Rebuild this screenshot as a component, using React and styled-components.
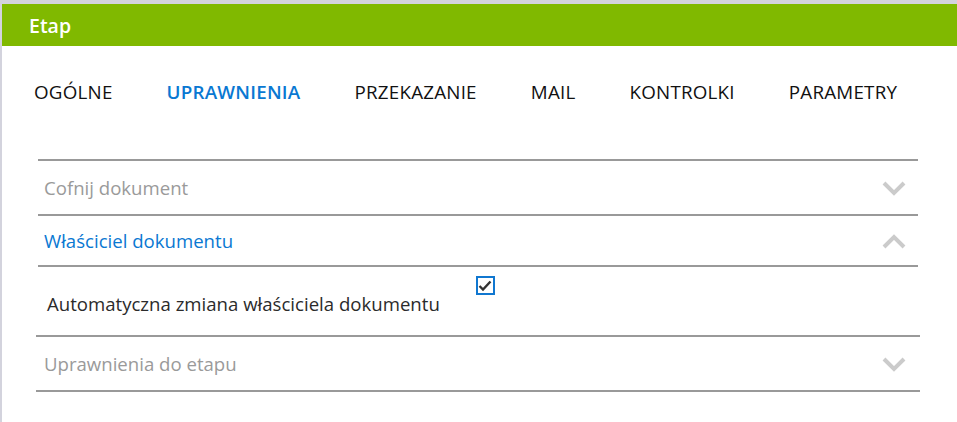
import React, { useState } from 'react';
import styled, { createGlobalStyle } from 'styled-components';

const GlobalStyle = createGlobalStyle`
  html, body {
    margin: 0;
    padding: 0;
    background: #ffffff;
  }
  body {
    font-family: "Open Sans", "Noto Sans", sans-serif;
  }
`;

const Frame = styled.div`
  min-height: 418px;
  border-top: 4px solid #d3d3dd;
  border-left: 2px solid #d3d3dd;
  background: #fff;
`;

const Header = styled.div`
  height: 42px;
  display: flex;
  align-items: center;
  padding-left: 27px;
  background: #80b900;
  color: #fff;
  font-size: 19.5px;
  font-weight: 600;
`;

const Tabs = styled.nav`
  display: flex;
  align-items: center;
  gap: 54px;
  height: 40px;
  margin-top: 26px;
  padding-left: 32px;
`;

const Tab = styled.div`
  font-size: 18.8px;
  letter-spacing: 0.22px;
  color: ${p => (p.active ? '#0a78d2' : '#111')};
  font-weight: ${p => (p.active ? 600 : 400)};
  cursor: pointer;
`;

const Accordion = styled.div`
  margin: 47px 37px 0 34px;
`;

const Item = styled.div`
  margin: 0 2px;
  border-top: 2px solid #999;
  &:last-child {
    margin: 0;
    border-bottom: 2px solid #999;
  }
  &:last-child > div:first-child {
    padding: 0 14px 0 8px;
  }
`;

const ItemHeader = styled.div`
  height: ${p => (p.open ? 49 : 53)}px;
  display: flex;
  align-items: center;
  justify-content: space-between;
  padding: 0 12px 0 6px;
  font-size: 18.6px;
  color: ${p => (p.open ? '#0a78d2' : '#9a9a9a')};
  cursor: pointer;
`;

const Content = styled.div`
  display: flex;
  align-items: flex-start;
  height: 68px;
  border-top: 2px solid #999;
  padding-left: 9px;
`;

const Label = styled.span`
  margin-top: 24px;
  font-size: 18.6px;
  color: #2b2b2b;
`;

const Check = styled.span`
  margin: 9px 0 0 36px;
  width: 15px;
  height: 15px;
  border: 2px solid #1077d0;
  display: flex;
  align-items: center;
  justify-content: center;
`;

const Chevron = ({ up }) => (
  <svg width="24" height="16" viewBox="0 0 24 16">
    <path
      d={up ? 'M2 14 L12 4 L22 14' : 'M2 3 L12 13 L22 3'}
      fill="none"
      stroke="#cbcbcb"
      strokeWidth="4"
    />
  </svg>
);

const tabs = ['OGÓLNE', 'UPRAWNIENIA', 'PRZEKAZANIE', 'MAIL', 'KONTROLKI', 'PARAMETRY'];

export default function App() {
  const [active, setActive] = useState('UPRAWNIENIA');
  const [open, setOpen] = useState('owner');

  const sections = [
    { id: 'undo', title: 'Cofnij dokument' },
    { id: 'owner', title: 'Właściciel dokumentu' },
    { id: 'rights', title: 'Uprawnienia do etapu' },
  ];

  return (
    <>
      <GlobalStyle />
      <Frame>
        <Header>Etap</Header>
        <Tabs>
          {tabs.map(t => (
            <Tab key={t} active={t === active} onClick={() => setActive(t)}>
              {t}
            </Tab>
          ))}
        </Tabs>
        <Accordion>
          {sections.map(s => (
            <Item key={s.id}>
              <ItemHeader open={open === s.id} onClick={() => setOpen(open === s.id ? null : s.id)}>
                {s.title}
                <Chevron up={open === s.id} />
              </ItemHeader>
              {open === s.id && s.id === 'owner' && (
                <Content>
                  <Label>Automatyczna zmiana właściciela dokumentu</Label>
                  <Check>
                    <svg width="14" height="12" viewBox="0 0 14 12">
                      <path d="M1.5 6 L5 9.5 L12.5 1.5" fill="none" stroke="#333" strokeWidth="2.4" />
                    </svg>
                  </Check>
                </Content>
              )}
            </Item>
          ))}
        </Accordion>
      </Frame>
    </>
  );
}
